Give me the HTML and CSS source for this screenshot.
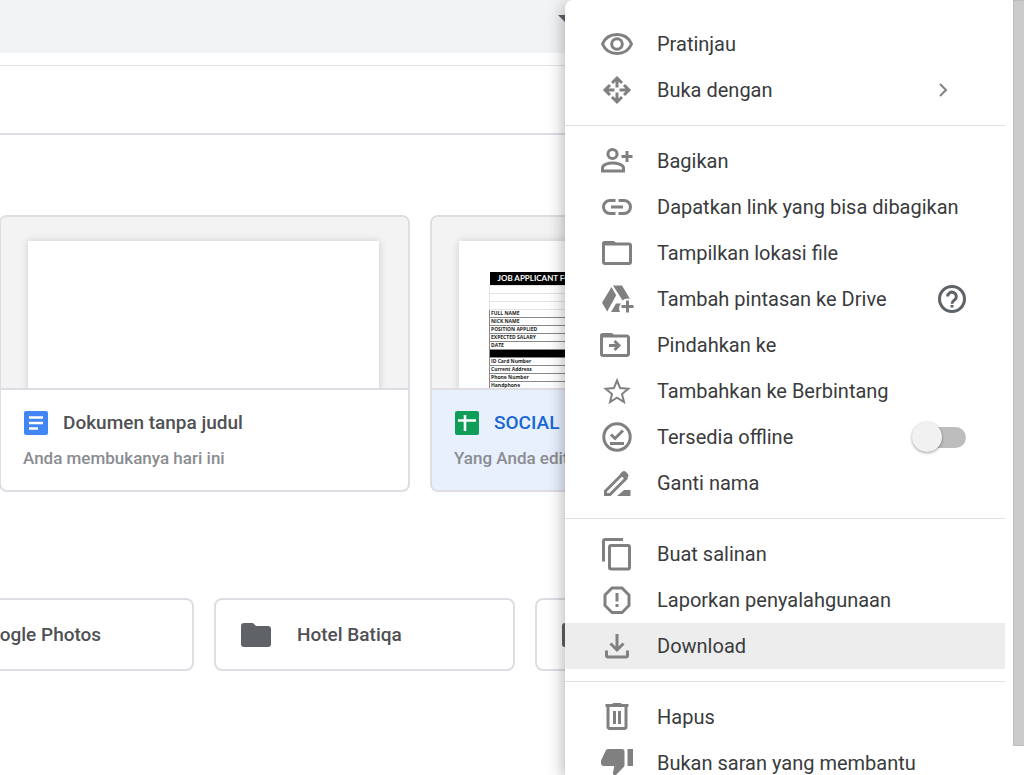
FILE: index.html
```html
<!DOCTYPE html>
<html lang="id">
<head>
<meta charset="utf-8">
<title>Drive</title>
<link rel="stylesheet" href="styles.css">
</head>
<body>
<div class="page">
  <header class="search">
    <button class="search-options" aria-label="Opsi penelusuran"><svg width="16" height="8" viewBox="0 0 16 8"><path d="M0 0h16L8 8z"/></svg></button>
  </header>
  <div class="toolbar"></div>
  <main class="content">
    <section class="files">
      <article class="file">
        <div class="preview"><div class="sheet"></div></div>
        <div class="info">
          <div class="title">
            <svg width="24" height="24" viewBox="0 0 24 24"><rect width="24" height="24" rx="2" fill="#4285f4"/><path d="M5 6.500h14M5 12h14M5 17.500h9" stroke="#fff" stroke-width="2.600"/></svg>
            <span>Dokumen tanpa judul</span>
          </div>
          <p class="note">Anda membukanya hari ini</p>
        </div>
      </article>
      <article class="file selected">
        <div class="preview"><div class="sheet">
          <table class="form">
            <tr class="form-head"><th colspan="3">JOB APPLICANT FORM</th></tr>
            <tr class="blank"><td></td><td></td><td></td></tr>
            <tr class="blank"><td></td><td></td><td></td></tr>
            <tr class="blank"><td></td><td></td><td></td></tr>
            <tr><td colspan="3">FULL NAME</td></tr>
            <tr><td colspan="3">NICK NAME</td></tr>
            <tr><td colspan="3">POSITION APPLIED</td></tr>
            <tr><td colspan="3">EXPECTED SALARY</td></tr>
            <tr><td colspan="3">DATE</td></tr>
            <tr class="bar"><td colspan="3"></td></tr>
            <tr><td colspan="2">ID Card Number</td><td>:</td></tr>
            <tr><td colspan="2">Current Address</td><td>:</td></tr>
            <tr><td colspan="2">Phone Number</td><td>:</td></tr>
            <tr><td colspan="2">Handphone</td><td>:</td></tr>
          </table>
        </div></div>
        <div class="info">
          <div class="title">
            <svg width="24" height="24" viewBox="0 0 24 24"><rect width="24" height="24" rx="2" fill="#0f9d58"/><path d="M3 9.500h18M10 4v16" stroke="#fff" stroke-width="2.600"/></svg>
            <span>SOCIAL</span>
          </div>
          <p class="note">Yang Anda edit</p>
        </div>
      </article>
    </section>
    <section class="folders">
      <button class="folder"><svg width="30" height="24" viewBox="0 0 30 24"><path d="M3 0h9l3 3h12a3 3 0 0 1 3 3v15a3 3 0 0 1-3 3H3a3 3 0 0 1-3-3V3a3 3 0 0 1 3-3z"/></svg><span>Google Photos</span></button>
      <button class="folder"><svg width="30" height="24" viewBox="0 0 30 24"><path d="M3 0h9l3 3h12a3 3 0 0 1 3 3v15a3 3 0 0 1-3 3H3a3 3 0 0 1-3-3V3a3 3 0 0 1 3-3z"/></svg><span>Hotel Batiqa</span></button>
      <button class="folder" aria-label="Folder"><svg width="30" height="24" viewBox="0 0 30 24"><path d="M3 0h9l3 3h12a3 3 0 0 1 3 3v15a3 3 0 0 1-3 3H3a3 3 0 0 1-3-3V3a3 3 0 0 1 3-3z"/></svg></button>
    </section>
  </main>

  <aside class="menu">
    <div class="menu-list">
      <button class="item"><svg class="icon" viewBox="0 0 36 36"><g class="line"><path d="M3.500 18C6 12 11.500 8.500 18 8.500S30 12 32.500 18C30 24 24.500 27.500 18 27.500S6 24 3.500 18z"/><circle cx="18" cy="18" r="5.300"/></g></svg><span>Pratinjau</span></button>
      <button class="item"><svg class="icon" viewBox="0 0 36 36"><path class="line" d="M18 15.500V7M13 11l5-5 5 5M18 20.500V29M13 25l5 5 5-5M15.500 18H7M11 13l-5 5 5 5M20.500 18H29M25 13l5 5-5 5"/></svg><span>Buka dengan</span>
        <svg class="arrow" width="28" height="28" viewBox="0 0 28 28"><path d="M2 8l6 6-6 6"/></svg></button>
      <hr>
      <button class="item"><svg class="icon" viewBox="0 0 36 36"><g class="line"><circle cx="13.500" cy="11" r="4.600"/><path d="M3.500 28v-3c0-3.500 6-5 10-5s11 1.500 11 5v3zM28 8v11M22.500 13.500h11"/></g></svg><span>Bagikan</span></button>
      <button class="item"><svg class="icon" viewBox="0 0 36 36"><path class="line" d="M16.500 11.500H11a6.500 6.500 0 0 0 0 13h5.500M19.500 11.500H25a6.500 6.500 0 0 1 0 13h-5.500M12 18h12"/></svg><span>Dapatkan link yang bisa dibagikan</span></button>
      <button class="item"><svg class="icon" viewBox="0 0 36 36"><path class="line" d="M6 9h24a1.500 1.500 0 0 1 1.500 1.500V27a1.500 1.500 0 0 1-1.500 1.500H6A1.500 1.500 0 0 1 4.500 27V9z"/><path d="M6 6h9l3.500 3.500H3V8.500A2.500 2.500 0 0 1 6 6z"/></svg><span>Tampilkan lokasi file</span></button>
      <button class="item"><svg class="icon" viewBox="0 0 36 36"><path d="M12.500 6l4.700 8.200L8.200 30.500 3 21.700zM14 4.500h9l8 13.500a8 8 0 0 0-7.500 1.500zM17 22.500h5a8 8 0 0 0-1 8.500h-9z"/><path class="line" d="M28.500 19.500v12M22.500 25.500h12"/></svg><span>Tambah pintasan ke Drive</span>
        <svg class="help" width="28" height="28" viewBox="0 0 28 28"><circle cx="14" cy="14" r="12.500"/><path d="M9.700 11.500a4.300 4.300 0 1 1 7 3.300c-1.700 1.400-2.700 2-2.700 4M14 20v2.500"/></svg></button>
      <button class="item"><svg class="icon" viewBox="0 0 36 36"><path class="line" d="M4 9h24a1.500 1.500 0 0 1 1.500 1.500V27a1.500 1.500 0 0 1-1.500 1.500H4A1.500 1.500 0 0 1 2.500 27V9zM10 18.500h10M15.500 14l4.500 4.500-4.500 4.500"/><path d="M4 6h9l3.500 3.500H1V8.500A2.500 2.500 0 0 1 4 6z"/></svg><span>Pindahkan ke</span></button>
      <button class="item"><svg class="icon" viewBox="0 0 36 36"><path class="line star" d="M18 7.500l3.100 7.600 8.200.6-6.300 5.300 2 8L18 24.700 11 29l2-8-6.300-5.300 8.200-.6z"/></svg><span>Tambahkan ke Berbintang</span></button>
      <button class="item"><svg class="icon" viewBox="0 0 36 36"><g class="line"><circle cx="18" cy="18" r="13.200"/><path d="M12 15.500l4 4 8-8M11 24.500h14"/></g></svg><span>Tersedia offline</span>
        <input class="switch" type="checkbox" role="switch" aria-label="Tersedia offline"></button>
      <button class="item"><svg class="icon" viewBox="0 0 36 36"><path class="line" d="M6.500 29.500v-3.500L23 9.500l4 4-16 16z"/><path d="M21 9l2-2a2.800 2.800 0 0 1 4 0l1.500 1.500a2.800 2.800 0 0 1 0 4L26.500 15zM18 31l7-6h6.500v6z"/></svg><span>Ganti nama</span></button>
      <hr>
      <button class="item"><svg class="icon" viewBox="0 0 36 36"><path class="line" d="M4.500 25.500V5A1.500 1.500 0 0 1 6 3.500h18"/><rect class="line" x="10.500" y="9.500" width="20" height="23.500" rx="1.500"/></svg><span>Buat salinan</span></button>
      <button class="item"><svg class="icon" viewBox="0 0 36 36"><path class="line" d="M13 6h10l7 7v10.500L23 30.500H13L6 23.500V13zM18 11v8.500M18 22v3"/></svg><span>Laporkan penyalahgunaan</span></button>
      <button class="item active"><svg class="icon" viewBox="0 0 36 36"><path class="line" d="M18 6v15M11.500 15.500L18 22l6.500-6.500M7.500 22.500v5A1.500 1.500 0 0 0 9 29h18a1.500 1.500 0 0 0 1.500-1.500v-5"/></svg><span>Download</span></button>
      <hr>
      <button class="item"><svg class="icon" viewBox="0 0 36 36"><path class="line" d="M6.500 6.500h23M9 8v20a1.500 1.500 0 0 0 1.500 1.500h15A1.500 1.500 0 0 0 27 28V8M15.500 12v13M20.500 12v13"/><path d="M14 4h8l1 2H13z"/></svg><span>Hapus</span></button>
      <button class="item"><svg class="icon" viewBox="0 0 36 36"><path d="M9.500 4H23a2.500 2.500 0 0 1 2.500 2.500V20c0 1-.3 1.600-1 2.300L16 31l-1.500-1.500c-.5-.5-.7-1-.5-2l1.300-6.500H5a3 3 0 0 1-3-3v-2.500L6.500 6a3 3 0 0 1 3-2zM28.500 4h5.500v17h-5.500z"/></svg><span>Bukan saran yang membantu</span></button>
    </div>
    <div class="scrollbar"></div>
  </aside>
</div>
</body>
</html>
```
FILE: styles.css
```css
* { box-sizing: border-box; }
body {
  margin: 0;
  font-family: Roboto, "Liberation Sans", sans-serif;
  color: #3c4043;
  background: #fff;
}
button {
  font: inherit;
  color: inherit;
  border: 0;
  background: none;
  text-align: left;
}
.page {
  position: relative;
  height: 100vh;
  overflow: hidden;
}
.search {
  display: flex;
  justify-content: flex-end;
  align-items: flex-start;
  height: 53px;
  padding: 15px 450px 0 0;
  background: #f1f3f4;
}
.search-options { display: flex; padding: 0; fill: #5f6368; }
.toolbar {
  height: 70px;
  margin-top: 12px;
  border-top: 1px solid #e4e4e6;
  border-bottom: 2px solid #dddde3;
}
.content { padding-top: 80px; }
.files {
  display: flex;
  gap: 20px;
  margin-left: -1px;
}
.file {
  flex: none;
  width: 411px;
  border: 2px solid #dddde3;
  border-radius: 8px;
  overflow: hidden;
}
.preview {
  height: 171px;
  padding: 24px 29px 0 27px;
  background: #f3f3f3;
  overflow: hidden;
}
.sheet {
  height: 160px;
  padding: 31px 0 0 30px;
  background: #fff;
  box-shadow: 0 0 8px rgba(0, 0, 0, .16);
}
.info {
  height: 102px;
  padding: 21px 22px;
  border-top: 2px solid #dddde3;
  overflow: hidden;
}
.title {
  display: flex;
  align-items: center;
  gap: 15px;
  font-size: 19px;
  font-weight: 500;
  line-height: 24px;
  padding-left: 1px;
  color: #4f5154;
}
.note {
  margin: 13px 0 0;
  font-size: 17px;
  font-weight: 500;
  line-height: 20px;
  color: #8a8c8f;
}
.selected .info { background: #e8f0fe; }
.selected .title { color: #1967d2; }

.form {
  width: 290px;
  table-layout: fixed;
  border-collapse: collapse;
  font: 700 5px/7px "Open Sans", sans-serif;
  color: #222;
}
.form td {
  height: 8px;
  padding: 0 1px;
  border: 1px solid #888;
}
.form .blank td { border-color: #e4e4e4; }
.form .form-head th {
  height: 13px;
  padding: 0 8px;
  font: 700 8px/12px Lato, sans-serif;
  text-align: left;
  color: #fff;
  background: #000;
}
.form td:first-child { width: 31px; }
.form td:nth-child(2) { width: 42px; }
.form .bar td { background: #000; }

.folders {
  display: flex;
  gap: 20px;
  margin: 106px 0 0 -107px;
}
.folder {
  flex: none;
  display: flex;
  align-items: center;
  gap: 26px;
  width: 301px;
  height: 73px;
  padding: 0 25px;
  border: 2px solid #dddde3;
  border-radius: 8px;
  font-size: 19px;
  font-weight: 500;
  color: #4f5154;
}
.folder svg { fill: #5f6368; }

.menu {
  position: absolute;
  top: 0;
  right: 0;
  bottom: 0;
  display: flex;
  justify-content: space-between;
  width: 459px;
  border-radius: 8px 0 0 0;
  background: #fff;
  box-shadow: 0 4px 18px rgba(0, 0, 0, .35);
  overflow: hidden;
}
.menu-list { width: 440px; padding-top: 21px; }
.menu hr {
  height: 1px;
  margin: 12px 0;
  border: 0;
  background: #dfdfdf;
}
.item {
  display: flex;
  align-items: center;
  width: 100%;
  height: 46px;
  padding: 0 39px 0 34px;
  font-size: 20px;
  line-height: 24px;
  white-space: nowrap;
  color: #3a3b3d;
}
.item span { flex: 1; margin-left: 22px; }
.active { background: #ededed; }
.icon { flex: none; width: 36px; height: 36px; fill: #808080; }
.line { fill: none; stroke: #808080; stroke-width: 3; }
.star { stroke-width: 2; }
.arrow { fill: none; stroke: #808080; stroke-width: 2; }
.help { fill: none; stroke: #5f6368; stroke-width: 3; }
.switch {
  appearance: none;
  display: flex;
  align-items: center;
  width: 46px;
  height: 21px;
  margin: 0;
  border-radius: 11px;
  background: #bdbdbd;
}
.switch::before {
  content: "";
  flex: none;
  width: 30px;
  height: 30px;
  margin-left: -8px;
  border-radius: 50%;
  background: #f1f1f1;
  box-shadow: 0 1px 3px rgba(0, 0, 0, .4);
}
.scrollbar {
  width: 11px;
  margin-bottom: 29px;
  border: 1px solid #bcbcbc;
  border-right: 0;
  background: #cbcbcb;
}
```
